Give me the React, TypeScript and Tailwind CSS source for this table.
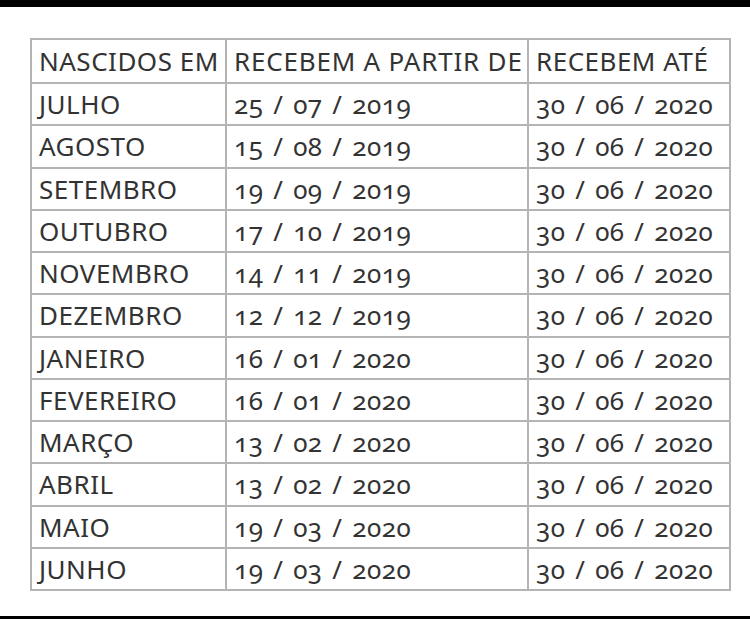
const rows: [string, string, string][] = [
  ["JULHO", "25 / 07 / 2019", "30 / 06 / 2020"],
  ["AGOSTO", "15 / 08 / 2019", "30 / 06 / 2020"],
  ["SETEMBRO", "19 / 09 / 2019", "30 / 06 / 2020"],
  ["OUTUBRO", "17 / 10 / 2019", "30 / 06 / 2020"],
  ["NOVEMBRO", "14 / 11 / 2019", "30 / 06 / 2020"],
  ["DEZEMBRO", "12 / 12 / 2019", "30 / 06 / 2020"],
  ["JANEIRO", "16 / 01 / 2020", "30 / 06 / 2020"],
  ["FEVEREIRO", "16 / 01 / 2020", "30 / 06 / 2020"],
  ["MARÇO", "13 / 02 / 2020", "30 / 06 / 2020"],
  ["ABRIL", "13 / 02 / 2020", "30 / 06 / 2020"],
  ["MAIO", "19 / 03 / 2020", "30 / 06 / 2020"],
  ["JUNHO", "19 / 03 / 2020", "30 / 06 / 2020"],
];

const cell = "border-2 border-[#b4b4b4] px-[7px] text-left font-normal align-middle whitespace-nowrap";
const date = cell + " [word-spacing:2.5px]";

export default function App() {
  return (
    <div className="w-[750px] h-[619px] flex flex-col bg-white overflow-hidden">
      <div className="h-[7px] bg-black shrink-0" />
      <div className="flex-1 pt-[31px] pl-[30px]">
        <table
          className="border-collapse w-[699px] table-fixed text-[26px] tracking-[0.5px] text-[#333333] font-['Noto_Sans',sans-serif] leading-none [font-feature-settings:'onum']"
        >
          <colgroup>
            <col className="w-[195px]" />
            <col className="w-[302px]" />
            <col className="w-[202px]" />
          </colgroup>
          <thead>
            <tr className="h-[44px]">
              <th className={cell}>NASCIDOS EM</th>
              <th className={cell + " tracking-[0.8px]"}>RECEBEM A PARTIR DE</th>
              <th className={cell}>RECEBEM ATÉ</th>
            </tr>
          </thead>
          <tbody>
            {rows.map(([mes, inicio, fim]) => (
              <tr key={mes} className="h-[42.25px]">
                <td className={cell}>{mes}</td>
                <td className={date}>{inicio}</td>
                <td className={date}>{fim}</td>
              </tr>
            ))}
          </tbody>
        </table>
      </div>
      <div className="h-[3px] bg-black shrink-0" />
    </div>
  );
}
